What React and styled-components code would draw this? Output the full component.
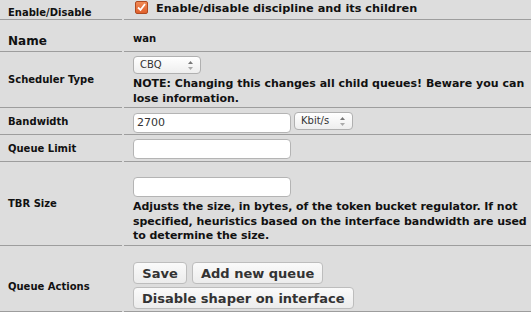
import React from 'react'
import styled, { createGlobalStyle } from 'styled-components'

const Global = createGlobalStyle`
  body {
    margin: 0;
    background: #dddddd;
    font-family: "DejaVu Sans", Verdana, sans-serif;
    color: #000;
  }
`

const Table = styled.div`
  display: grid;
  grid-template-columns: 122px 1fr;
  column-gap: 2px;
  width: 531px;
  background: #dddddd;
`

const Label = styled.div`
  height: ${p => p.h}px;
  box-sizing: border-box;
  display: flex;
  align-items: center;
  padding: ${p => p.pt || 0}px 0 0 8px;
  border-bottom: 1px solid #9d9d9d;
  font-size: ${p => (p.big ? 12 : 10)}px;
  font-weight: bold;
  color: #111;
`

const Value = styled.div`
  height: ${p => p.h}px;
  box-sizing: border-box;
  padding: ${p => p.pt || 0}px 0 0 9px;
  border-bottom: 1px solid #9d9d9d;
  font-size: 11px;
  font-weight: bold;
  line-height: 14.5px;
  color: #111;
`

const CheckRow = styled.label`
  display: flex;
  align-items: flex-start;
  gap: 8px;
  font-size: 11.3px;
  line-height: 14px;
`

const Check = styled.span`
  width: 13px;
  height: 13px;
  margin: -1px 0 0 2px;
  border-radius: 2px;
  background: linear-gradient(#f08a55, #e0602c);
  border: 1px solid #b04a20;
  box-sizing: border-box;
  display: flex;
  align-items: center;
  justify-content: center;
`

const Small = styled.div`
  font-size: 10px;
`

const Select = styled.div`
  width: ${p => p.w}px;
  height: 18px;
  box-sizing: border-box;
  border: 1px solid #b0b0b0;
  border-radius: 4px;
  background: linear-gradient(#ffffff, #eeeeee);
  display: flex;
  align-items: center;
  justify-content: space-between;
  padding: 0 6px 0 6px;
  font-size: 10px;
  font-weight: normal;
  color: #333;
  margin-bottom: 3px;
`

const Arrows = styled.svg`
  width: 7px;
  height: 11px;
`

const Input = styled.div`
  width: 158px;
  height: 20px;
  box-sizing: border-box;
  border: 1px solid #b4b4b4;
  border-radius: 4px;
  background: #fff;
  font-size: 11px;
  font-weight: normal;
  color: #333;
  padding: 3px 3px;
  line-height: 12px;
`

const Inline = styled.div`
  display: flex;
  align-items: center;
  gap: 3px;
`

const Buttons = styled.div`
  display: flex;
  gap: 5px;
  margin-bottom: 3px;
`

const Button = styled.button`
  height: 22px;
  min-width: 54px;
  box-sizing: border-box;
  border: 1px solid #bdbdbd;
  border-radius: 4px;
  background: linear-gradient(#fafafa, #ececec);
  font-family: "DejaVu Sans", Verdana, sans-serif;
  font-size: 13px;
  font-weight: bold;
  color: #333;
  padding: 0 8px;
`

const Help = styled.div`
  margin-top: 3px;
  letter-spacing: -0.05px;
`

const UpDown = () => (
  <Arrows viewBox="0 0 7 11">
    <path d="M1 4 L3.5 1 L6 4 Z" fill="#777" />
    <path d="M1 7 L3.5 10 L6 7 Z" fill="#aaa" />
  </Arrows>
)

export default function App() {
  return (
    <>
      <Global />
      <Table>
        <Label h={20} pt={6}>Enable/Disable</Label>
        <Value h={20} pt={2}>
          <CheckRow>
            <Check>
              <svg width="9" height="9" viewBox="0 0 9 9">
                <path d="M1 4.5 L3.5 7 L8 1" stroke="#fff" strokeWidth="1.8" fill="none" />
              </svg>
            </Check>
            Enable/disable discipline and its children
          </CheckRow>
        </Value>

        <Label h={32} big pt={11}>Name</Label>
        <Value h={32} pt={12}><Small>wan</Small></Value>

        <Label h={56}>Scheduler Type</Label>
        <Value h={56} pt={4}>
          <Select w={68}>CBQ<UpDown /></Select>
          NOTE: Changing this changes all child queues! Beware you can lose information.
        </Value>

        <Label h={27}>Bandwidth</Label>
        <Value h={27} pt={4}>
          <Inline>
            <Input>2700</Input>
            <Select w={59}>Kbit/s<UpDown /></Select>
          </Inline>
        </Value>

        <Label h={27}>Queue Limit</Label>
        <Value h={27} pt={4}><Input /></Value>

        <Label h={84}>TBR Size</Label>
        <Value h={84} pt={15}>
          <Input />
          <Help>Adjusts the size, in bytes, of the token bucket regulator. If not specified, heuristics based on the interface bandwidth are used to determine the size.</Help>
        </Value>

        <Label h={66} pt={16}>Queue Actions</Label>
        <Value h={66} pt={16}>
          <Buttons>
            <Button>Save</Button>
            <Button>Add new queue</Button>
          </Buttons>
          <Buttons>
            <Button>Disable shaper on interface</Button>
          </Buttons>
        </Value>
      </Table>
    </>
  )
}
